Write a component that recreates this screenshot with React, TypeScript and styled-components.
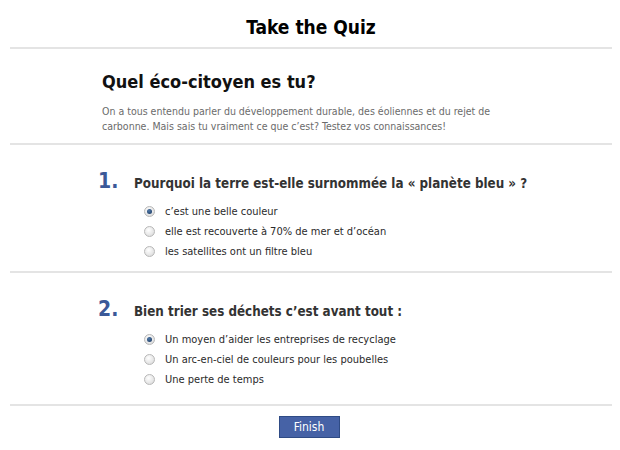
import React, { FC } from 'react';
import styled, { createGlobalStyle } from 'styled-components';

const GlobalStyle = createGlobalStyle`
  body {
    margin: 0;
    background: #ffffff;
    font-family: Tahoma, "DejaVu Sans Condensed", "DejaVu Sans", sans-serif;
  }
`;

interface Question {
  title: string;
  options: string[];
  selected: number;
}

const questions: Question[] = [
  {
    title: 'Pourquoi la terre est-elle surnommée la « planète bleu » ?',
    options: [
      'c’est une belle couleur',
      'elle est recouverte à 70% de mer et d’océan',
      'les satellites ont un filtre bleu',
    ],
    selected: 0,
  },
  {
    title: 'Bien trier ses déchets c’est avant tout :',
    options: [
      'Un moyen d’aider les entreprises de recyclage',
      'Un arc-en-ciel de couleurs pour les poubelles',
      'Une perte de temps',
    ],
    selected: 0,
  },
];

const Page = styled.div`
  width: 620px;
  height: 450px;
  padding: 0 8px 0 10px;
  box-sizing: border-box;
`;

const Section = styled.div<{ $top: number; $bottom: number; $left: number }>`
  padding: ${p => `${p.$top}px 0 ${p.$bottom}px ${p.$left}px`};
  border-bottom: 2px solid #e4e4e4;
`;

const Title = styled.h1`
  margin: 0;
  text-align: center;
  font-size: 19px;
  line-height: 26px;
  font-weight: bold;
  color: #000;
`;

const Heading = styled.h2`
  margin: 0 0 11px;
  font-size: 18px;
  line-height: 22px;
  font-weight: bold;
  color: #111;
`;

const Intro = styled.p`
  margin: 0;
  font-size: 10.5px;
  line-height: 15px;
  color: #6b6b6b;
  width: 400px;
`;

const QuestionRow = styled.div`
  display: flex;
  align-items: baseline;
  margin-bottom: 8px;
`;

const Number = styled.span`
  width: 36px;
  font-size: 21px;
  line-height: 24px;
  font-weight: bold;
  color: #3b5998;
`;

const QuestionText = styled.span`
  font-size: 13.3px;
  font-weight: bold;
  color: #333;
`;

const Options = styled.div`
  padding-left: 46px;
`;

const Option = styled.label`
  display: flex;
  align-items: center;
  height: 20px;
  font-size: 11px;
  color: #2a2a2a;
`;

const Radio = styled.span<{ $checked: boolean }>`
  position: relative;
  width: 9px;
  height: 9px;
  margin-right: 10px;
  border-radius: 50%;
  border: 1px solid #b8b8b8;
  background: radial-gradient(circle at 40% 35%, #ffffff 0%, #e2e2e2 70%, #cfcfcf 100%);

  &::after {
    content: '';
    display: ${p => (p.$checked ? 'block' : 'none')};
    position: absolute;
    left: 2px;
    top: 2px;
    width: 5px;
    height: 5px;
    border-radius: 50%;
    background: radial-gradient(circle at 40% 35%, #4f78a8 0%, #16335a 100%);
  }
`;

const Footer = styled.div`
  display: flex;
  justify-content: center;
  padding: 10px 4px 0 0;
`;

const Button = styled.button`
  width: 61px;
  height: 22px;
  padding: 0;
  border: 1px solid #2f4b85;
  background: #4662a6;
  color: #ffffff;
  font-family: inherit;
  font-size: 12px;
`;

const QuestionBlock: FC<{ index: number; q: Question; bottom: number; top: number }> = ({
  index,
  q,
  bottom,
  top,
}) => (
  <Section $top={top} $bottom={bottom} $left={88}>
    <QuestionRow>
      <Number>{index + 1}.</Number>
      <QuestionText>{q.title}</QuestionText>
    </QuestionRow>
    <Options>
      {q.options.map((o, i) => (
        <Option key={o}>
          <Radio $checked={i === q.selected} />
          {o}
        </Option>
      ))}
    </Options>
  </Section>
);

const App: FC = () => (
  <>
    <GlobalStyle />
    <Page>
      <Section $top={14} $bottom={7} $left={0}>
        <Title>Take the Quiz</Title>
      </Section>
      <Section $top={22} $bottom={9} $left={92}>
        <Heading>Quel éco-citoyen es tu?</Heading>
        <Intro>
          On a tous entendu parler du développement durable, des éoliennes et du rejet de
          carbonne. Mais sais tu vraiment ce que c’est? Testez vos connaissances!
        </Intro>
      </Section>
      {questions.map((q, i) => (
        <QuestionBlock key={i} index={i} q={q} top={24} bottom={i === 0 ? 10 : 15} />
      ))}
      <Footer>
        <Button>Finish</Button>
      </Footer>
    </Page>
  </>
);

export default App;
